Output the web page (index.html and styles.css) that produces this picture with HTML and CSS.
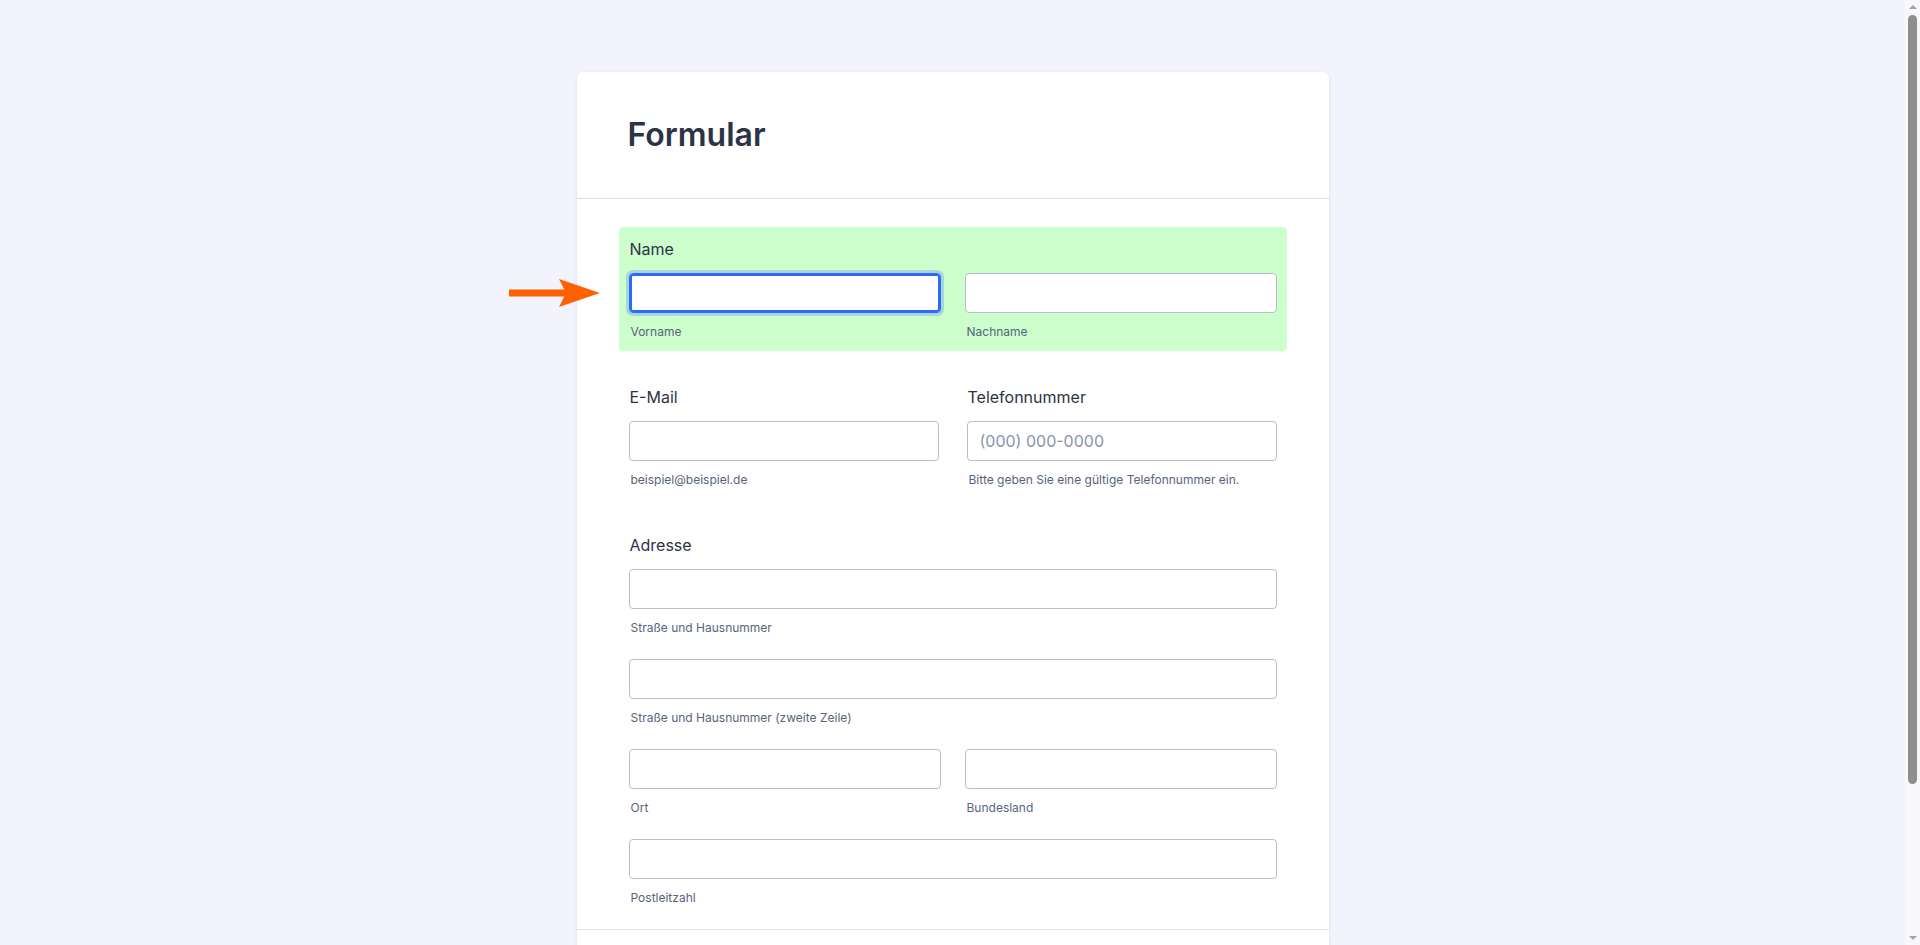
FILE: index.html
```html
<!DOCTYPE html>
<html lang="de">
<head>
<meta charset="utf-8">
<title>Formular</title>
<link rel="stylesheet" href="styles.css">
</head>
<body>
<div class="page">
  <form class="card">
    <svg class="pointer-arrow" width="92" height="30" viewBox="0 0 92 30" aria-hidden="true">
      <rect x="0" y="10.5" width="60" height="7" fill="#ff6100"/>
      <polygon points="50,0 91,14 50,28 57,14" fill="#ff6100"/>
    </svg>
    <div class="card-header">
      <h1 class="title">Formular</h1>
    </div>
    <div class="card-body">
      <div class="field field-highlight">
        <label class="field-label">Name</label>
        <div class="grid-2">
          <div class="sub">
            <input class="input is-focused" type="text">
            <span class="sublabel">Vorname</span>
          </div>
          <div class="sub">
            <input class="input" type="text">
            <span class="sublabel">Nachname</span>
          </div>
        </div>
      </div>

      <div class="field-row">
        <div class="field">
          <label class="field-label">E-Mail</label>
          <input class="input" type="email">
          <span class="sublabel">beispiel@beispiel.de</span>
        </div>
        <div class="field">
          <label class="field-label">Telefonnummer</label>
          <input class="input" type="tel" placeholder="(000) 000-0000">
          <span class="sublabel">Bitte geben Sie eine gültige Telefonnummer ein.</span>
        </div>
      </div>

      <div class="field">
        <label class="field-label">Adresse</label>
        <div class="address">
          <div class="sub">
            <input class="input" type="text">
            <span class="sublabel">Straße und Hausnummer</span>
          </div>
          <div class="sub">
            <input class="input" type="text">
            <span class="sublabel">Straße und Hausnummer (zweite Zeile)</span>
          </div>
          <div class="grid-2">
            <div class="sub">
              <input class="input" type="text">
              <span class="sublabel">Ort</span>
            </div>
            <div class="sub">
              <input class="input" type="text">
              <span class="sublabel">Bundesland</span>
            </div>
          </div>
          <div class="sub">
            <input class="input" type="text">
            <span class="sublabel">Postleitzahl</span>
          </div>
        </div>
      </div>
    </div>
    <div class="card-footer"></div>
  </form>
</div>
<div class="scrollbar" aria-hidden="true">
  <span class="scroll-arrow scroll-up"></span>
  <span class="scroll-thumb"></span>
  <span class="scroll-arrow scroll-down"></span>
</div>
</body>
</html>
```

FILE: styles.css
```css
* {
  box-sizing: border-box;
}

html, body {
  margin: 0;
  padding: 0;
}

body {
  background: #f3f3fe;
  font-family: Inter, "Noto Sans", "Liberation Sans", sans-serif;
  color: #2c3345;
}

.page {
  margin-right: 15px;
  padding: 72px 0 36px;
  display: flex;
  justify-content: center;
}

.card {
  position: relative;
  width: 752px;
  background: #ffffff;
  border-radius: 6px;
  box-shadow: 0 4px 4px rgba(87, 114, 174, 0.08), 0 0 2px rgba(87, 114, 174, 0.12);
}

.pointer-arrow {
  position: absolute;
  left: -68px;
  top: 207px;
}

.card-header {
  height: 127px;
  padding: 0 51px;
  display: flex;
  align-items: center;
  border-bottom: 1px solid #dcdce8;
}

.title {
  margin: 0;
  font-size: 32px;
  font-weight: 600;
  line-height: 40px;
  color: #2c3345;
}

.card-body {
  padding: 16px 42px 0;
  border-bottom: 1px solid #e3e3ee;
}

.field {
  padding: 12px 10px 10px;
  margin: 12px 0;
  border-radius: 4px;
  display: flex;
  flex-direction: column;
}

.field-highlight {
  background: #ccffcc;
}

.field-row {
  display: grid;
  grid-template-columns: 1fr 1fr;
  column-gap: 8px;
}

.field-label {
  padding-left: 1px;
  font-size: 16px;
  font-weight: 400;
  line-height: 20px;
  margin-bottom: 14px;
  color: #2c3345;
}

.grid-2 {
  display: grid;
  grid-template-columns: 1fr 1fr;
  column-gap: 24px;
}

.address {
  display: flex;
  flex-direction: column;
  row-gap: 22px;
}

.sub {
  display: flex;
  flex-direction: column;
}

.input {
  display: block;
  width: 100%;
  height: 40px;
  padding: 0 12px;
  border: 1px solid #b8bdc9;
  border-radius: 4px;
  background: #ffffff;
  font-family: Inter, "Noto Sans", "Liberation Sans", sans-serif;
  font-size: 16px;
  color: #2c3345;
  outline: none;
}

.input::placeholder {
  color: #8894ab;
}

.input.is-focused {
  border-color: #2e69ff;
  box-shadow: inset 0 0 0 2px #2e69ff, 0 0 0 3px rgba(46, 105, 255, 0.25);
}

.sublabel {
  margin-top: 10px;
  padding-left: 2px;
  font-size: 12px;
  line-height: 18px;
  color: #57647e;
}

.card-footer {
  height: 130px;
}

.scrollbar {
  position: fixed;
  top: 0;
  right: 0;
  width: 15px;
  height: 100vh;
  background: #f8f8fb;
  display: flex;
  flex-direction: column;
  align-items: center;
}

.scroll-arrow {
  width: 0;
  height: 0;
  border-left: 4px solid transparent;
  border-right: 4px solid transparent;
}

.scroll-up {
  margin-top: 5px;
  border-bottom: 4px solid #a3a3a3;
}

.scroll-down {
  margin-top: auto;
  margin-bottom: 5px;
  border-top: 4px solid #a3a3a3;
}

.scroll-thumb {
  margin-top: 6px;
  width: 9px;
  height: 769px;
  border-radius: 5px;
  background: #8f8f8f;
}
```
